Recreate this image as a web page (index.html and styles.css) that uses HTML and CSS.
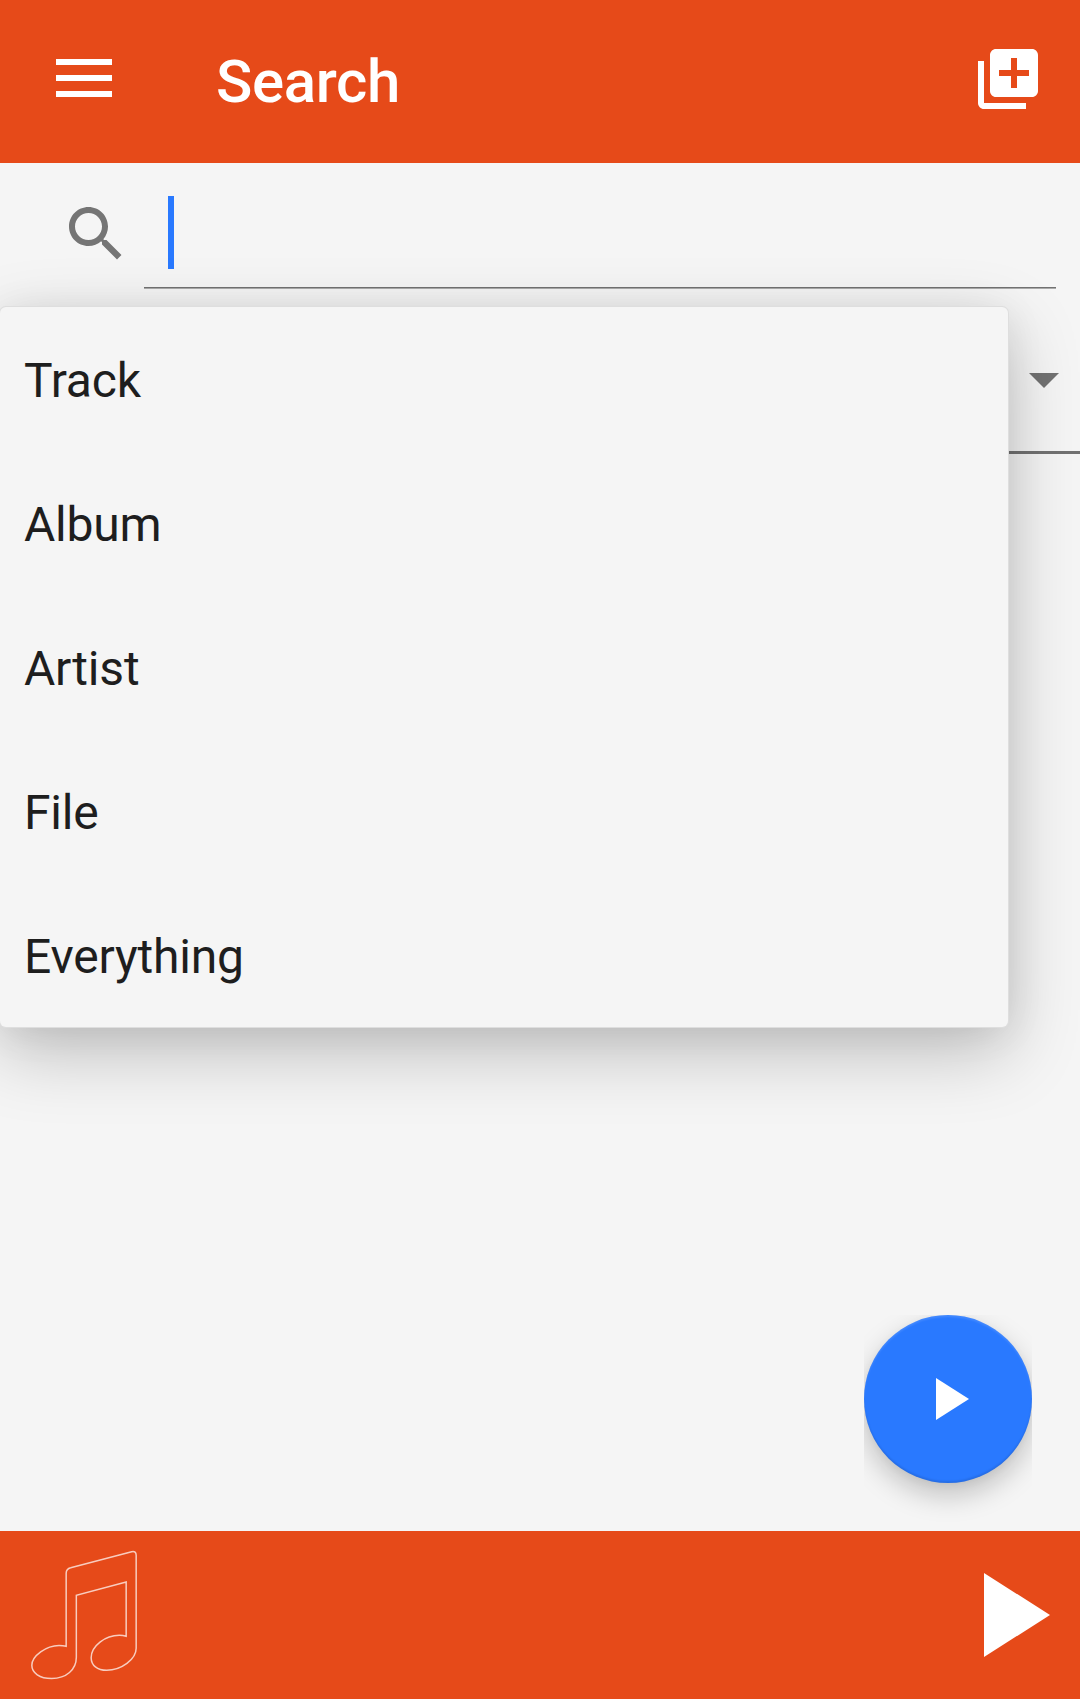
FILE: index.html
```html
<!DOCTYPE html>
<html lang="en">
<head>
<meta charset="utf-8">
<title>Search</title>
<link rel="stylesheet" href="styles.css">
</head>
<body>
<div class="app">
  <header class="toolbar">
    <svg class="menu-icon" viewBox="0 0 56 38"><path d="M0 0h56v6H0zM0 16h56v6H0zM0 32h56v6H0z"/></svg>
    <h1 class="title">Search</h1>
    <svg class="add-icon" viewBox="0 0 24 24"><path d="M4 6H2v14c0 1.100.9 2 2 2h14v-2H4V6zm16-4H8c-1.100 0-2 .9-2 2v12c0 1.100.9 2 2 2h12c1.100 0 2-.9 2-2V4c0-1.100-.9-2-2-2zm-1 9h-4v4h-2v-4H9V9h4V5h2v4h4v2z"/></svg>
  </header>
  <main class="content">
    <div class="search-row">
      <svg class="search-icon" viewBox="0 0 24 24"><path d="M15.500 14h-.79l-.28-.27C15.410 12.590 16 11.110 16 9.500 16 5.910 13.090 3 9.500 3S3 5.910 3 9.500 5.910 16 9.500 16c1.610 0 3.090-.59 4.230-1.570l.27.28v.79l5 4.990L20.490 19l-4.990-5zm-6 0C7.010 14 5 11.990 5 9.500S7.010 5 9.500 5 14 7.010 14 9.500 11.990 14 9.500 14z"/></svg>
      <div class="field"><span class="cursor"></span></div>
    </div>
    <div class="spinner">
      <svg class="caret" viewBox="0 0 30 15"><path d="M0 0h30L15 15z"/></svg>
      <ul class="dropdown">
        <li>Track</li>
        <li>Album</li>
        <li>Artist</li>
        <li>File</li>
        <li>Everything</li>
      </ul>
    </div>
    <div class="fab-area">
      <div class="fab"><svg class="fab-icon" viewBox="0 0 33 42"><path d="M0 0l33 21L0 42z"/></svg></div>
    </div>
  </main>
  <footer class="player">
    <svg class="note" viewBox="0 33 600 504"><path d="M198.500 379V160Q198.500 146 212 143L395 95Q408.500 92 408.500 106V385C408.500 418 364 451 320 451C292 451 273.500 436 273.500 413C273.500 378 316 346 358 346Q369 346 378.500 349V186L229 226V412C229 449 199 475.500 155 475.500C119 475.500 95.500 459 95.500 436C95.500 408 139 376.500 177 376.500Q189 376.500 198.500 379Z"/></svg>
    <svg class="play" viewBox="0 0 66 84"><path d="M0 0l66 42L0 84z"/></svg>
  </footer>
</div>
</body>
</html>
```
FILE: styles.css
```css
* { box-sizing: border-box; }

body {
  margin: 0;
  font-family: Roboto, "Liberation Sans", sans-serif;
}

svg { display: block; flex: none; }

.app {
  display: flex;
  flex-direction: column;
  width: 1080px;
  height: 1699px;
  overflow: hidden;
  background: #f5f5f5;
}

.toolbar {
  display: flex;
  align-items: flex-start;
  height: 163px;
  padding: 0 36px 0 56px;
  background: #e64a19;
}

.menu-icon { width: 56px; height: 38px; margin-top: 59px; fill: #fff; }

.title {
  flex: 1;
  margin: 47px 0 0 104px;
  font-size: 60px;
  font-weight: 500;
  line-height: 70px;
  letter-spacing: -.35px;
  color: #fff;
}

.add-icon { width: 72px; height: 72px; margin-top: 43px; fill: #fff; }

.content {
  position: relative;
  flex: 1;
  overflow: hidden;
}

.search-row {
  display: flex;
  height: 126px;
  padding: 0 24px 0 60px;
}

.search-icon { width: 72px; height: 72px; margin: 35px 12px 0 0; fill: #757575; }

.field {
  flex: 1;
  padding: 33px 24px 0;
  border-bottom: 1px solid #aaa;
  box-shadow: inset 0 -1px #727272;
}

.cursor { display: block; width: 6px; height: 73px; background: #2979ff; }

.spinner {
  position: relative;
  display: flex;
  justify-content: flex-end;
  height: 165px;
  padding: 84px 21px 0 0;
  border-bottom: 3px solid #727272;
}

.caret { width: 30px; height: 15px; fill: #727272; }

.dropdown {
  position: absolute;
  top: 18px;
  left: 0;
  width: 1008px;
  margin: 0;
  padding: 0;
  list-style: none;
  background: #f5f5f5;
  border-radius: 6px;
  box-shadow: 0 0 0 1px #dedede, 0 24px 72px rgba(0, 0, 0, .23), 0 4px 40px rgba(0, 0, 0, .07);
}

.dropdown li {
  height: 144px;
  padding-left: 24px;
  font-size: 48px;
  line-height: 148px;
  letter-spacing: -.2px;
  color: #1e1e1e;
}

/* Clips the button's shadow at its left and right edges. */
.fab-area {
  position: absolute;
  right: 48px;
  bottom: 0;
  width: 168px;
  height: 216px;
  overflow: hidden;
}

.fab {
  display: flex;
  align-items: center;
  height: 168px;
  padding-left: 72px;
  border-radius: 50%;
  background: #2979ff;
  box-shadow: 0 12px 28px rgba(0, 0, 0, .22), 0 2px 8px rgba(0, 0, 0, .04), inset 0 2px 2px rgba(255, 255, 255, .12), inset 0 -2px 2px rgba(0, 0, 0, .1);
}

.fab-icon { width: 33px; height: 42px; fill: #fff; }

.player {
  display: flex;
  align-items: center;
  justify-content: space-between;
  height: 168px;
  padding-right: 30px;
  background: #e64a19;
}

.note { width: 200px; height: 168px; fill: none; stroke: #fff; stroke-opacity: .72; stroke-width: 4.500; }

.play { width: 66px; height: 84px; fill: #fff; }
```
